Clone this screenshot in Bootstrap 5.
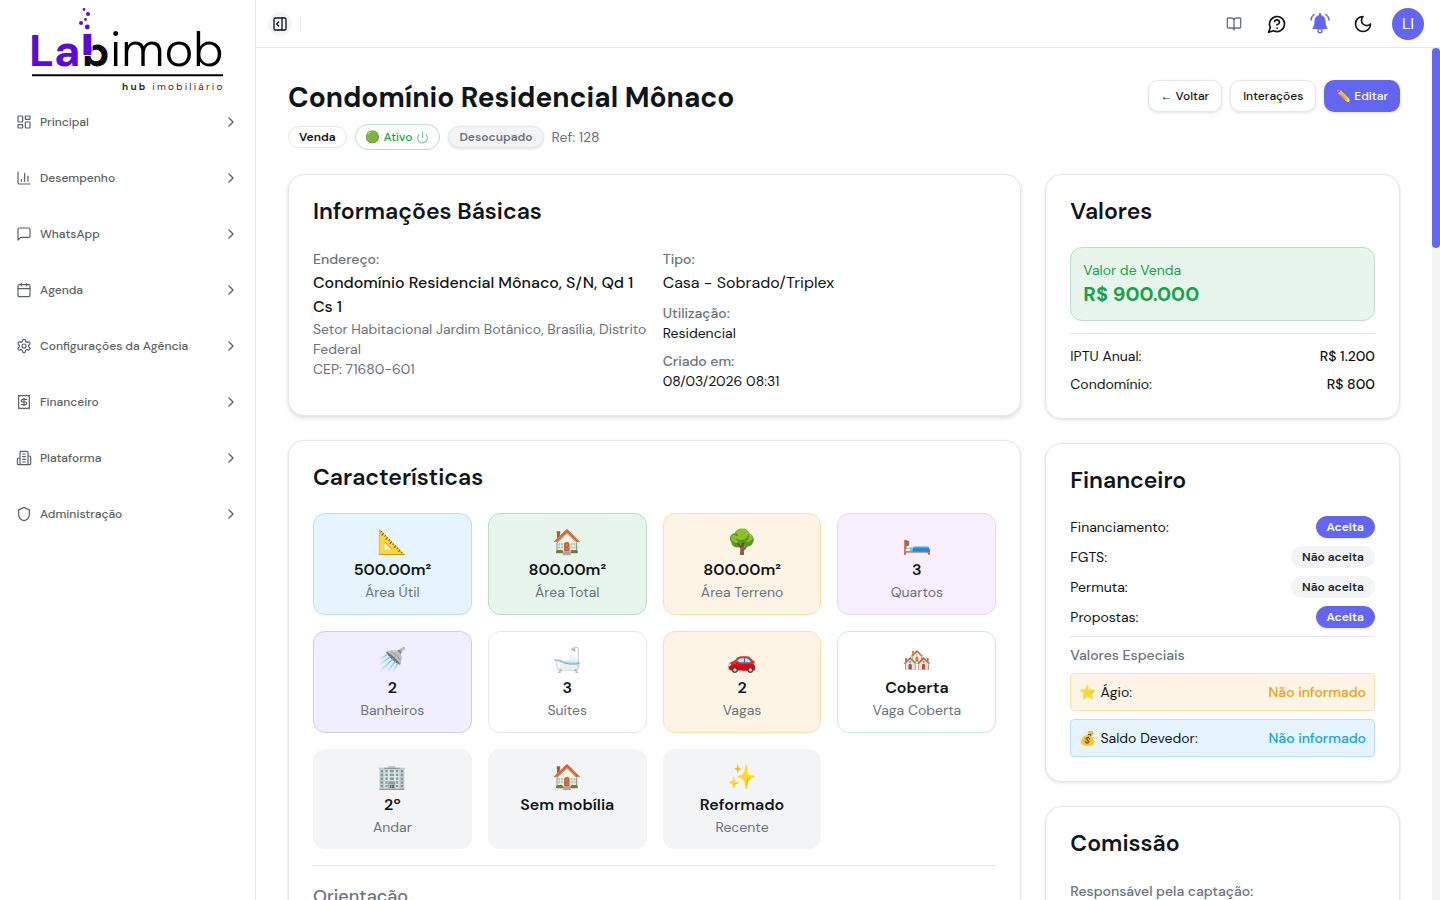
<!DOCTYPE html>
<html lang="pt-BR">
<head>
<meta charset="utf-8">
<meta name="viewport" content="width=device-width, initial-scale=1">
<title>Condomínio Residencial Mônaco - Labimob</title>
<link href="https://cdn.jsdelivr.net/npm/bootstrap@5.3.0/dist/css/bootstrap.min.css" rel="stylesheet">
<style>
  :root { --ink: #111418; --soft: #6b7280; --brand: #6366f1; --line: #e5e7eb; --ok: #16a34a; --warn: #f59e0b; --sky: #0ea5e9; }
  body { font-family: "DM Sans", Inter, "Liberation Sans", "Noto Color Emoji", sans-serif; font-size: 14px; line-height: 20px; color: var(--ink); background: #fff; }
  svg.ico { width: 16px; height: 16px; fill: none; stroke: currentColor; stroke-width: 2; stroke-linecap: round; stroke-linejoin: round; flex: none; }
  svg.ico-lg { width: 20px; height: 20px; }
  .sidebar { width: 256px; border-right: 1px solid var(--line); }
  .brand { height: 94px; padding-left: 28px; }
  .side-link { height: 56px; padding: 0 16px; font-size: 12px; font-weight: 500; color: #5b5f66; text-decoration: none; }
  .side-link .ico { stroke-width: 1.8; }
  .side-link .chev { stroke-width: 2; }
  .topbar { height: 48px; border-bottom: 1px solid var(--line); padding: 0 16px 0 12px; }
  .tool { width: 35px; height: 35px; color: var(--ink); }
  .toggle-side { width: 24px; height: 24px; background: #f3f4f6; color: var(--ink); }
  .avatar { width: 32px; height: 32px; background: var(--brand); color: #fff; font-size: 16px; }
  .rule-v { width: 1px; height: 16px; background: var(--line); }
  .track { width: 8px; background: #f3f4f6; }
  .thumb { height: 200px; background: var(--brand); border-radius: 4px; }
  .page-title { font-size: 28px; line-height: 36px; font-weight: 700; }
  .btn-act { height: 32px; font-size: 12px; font-weight: 500; line-height: 16px; padding: 0 12px; border-radius: 10px; border: 1px solid var(--line); background: #fff; color: var(--ink); box-shadow: 0 1px 3px rgba(0,0,0,.12); }
  .btn-act.primary { background: var(--brand); border: 0; color: #fff; }
  .arrow { font-family: "Liberation Sans", sans-serif; }
  .pill { font-size: 12px; line-height: 16px; font-weight: 600; padding: 2px 10px; border-radius: 11px; border: 1px solid var(--line); background: #fff; color: var(--ink); }
  .pill-on { background: var(--brand); border-color: var(--brand); color: #fff; box-shadow: 0 1px 2px rgba(0,0,0,.1); }
  .pill-off { background: #f3f4f6; border-color: #f3f4f6; color: #1f2430; }
  .pill-state { background: #f3f4f6; color: var(--soft); box-shadow: 0 1px 3px rgba(0,0,0,.12); }
  .pill-live { font-size: 12px; line-height: 16px; font-weight: 500; padding: 4px 10px; border-radius: 13px; border: 1px solid #b9e0ca; background: #fff; color: var(--ok); }
  .pill-live .ico { width: 13px; height: 13px; opacity: .6; }
  .panel { border: 1px solid var(--line); border-radius: 16px; padding: 24px; background: #fff; box-shadow: 0 1px 3px rgba(0,0,0,.12); }
  .panel-lift { box-shadow: 0 2px 4px rgba(0,0,0,.14); }
  .panel h2 { font-size: 23px; line-height: 24px; font-weight: 600; margin: 0 0 24px; }
  .lbl { font-weight: 500; color: var(--soft); }
  .lbl-tall { line-height: 24px; }
  .soft { color: var(--soft); }
  .body-lg { font-size: 16px; line-height: 24px; }
  .tile { padding: 12px; border-radius: 12px; text-align: center; height: 100%; }
  .tile .pic { font-size: 24px; line-height: 32px; }
  .t-sky { background: #e6f5fd; border: 1px solid #b5e1f6; }
  .t-ok { background: #e8f5ec; border: 1px solid #b9dfca; }
  .t-warn { background: #fef4e6; border: 1px solid #fbe0ae; }
  .t-plum { background: #f7effe; border: 1px solid #ead6fa; }
  .t-indigo { background: #efeffd; border: 1px solid #cccdf8; }
  .t-plain { border: 1px solid #efe2fb; }
  .t-teal { border: 1px solid #c5ecec; }
  .t-gray { background: #f3f4f6; }
  .price { font-size: 20px; line-height: 28px; font-weight: 700; }
  .sale { padding: 12px; border-radius: 12px; margin-bottom: 12px; color: var(--ok); }
  .split { border-top: 1px solid var(--line); }
  .fees { padding-top: 12px; }
  .strip { padding: 8px; border-radius: 4px; }
  .c-warn { color: var(--warn); }
  .c-sky { color: var(--sky); }
  .sub { font-size: 18px; line-height: 28px; font-weight: 500; color: var(--soft); margin: 0; }
</style>
</head>
<body>
<div class="d-flex vh-100 overflow-hidden">
  <aside class="sidebar d-flex flex-column flex-shrink-0">
    <a class="brand d-block flex-shrink-0" href="#" aria-label="Labimob">
      <svg width="200" height="94" viewBox="28 0 200 94">
        <g fill="#5b0bd5">
          <circle cx="84" cy="9.500" r="1.400"/><circle cx="88" cy="14" r="2"/><circle cx="85.500" cy="19.500" r="1.400"/><circle cx="81" cy="23" r="2"/><circle cx="87.300" cy="27" r="2.400"/>
        </g>
        <text x="29" y="66" font-family="DM Sans, sans-serif" font-weight="700" font-size="45" fill="#5b0bd5">La</text>
        <text x="82" y="66" font-family="DM Sans, sans-serif" font-weight="800" font-size="42" fill="#0c0c10">b</text>
        <path d="M83.500 34h8v21.500h-8z" fill="#5b0bd5"/>
        <path d="M83 55.500h9V34" fill="none" stroke="#fff"/>
        <text x="110" y="66" font-family="DM Sans, sans-serif" font-weight="300" font-size="49" fill="#000">imob</text>
        <path d="M32 75.200h191" stroke="#000" stroke-width="2"/>
        <text x="122" y="90" font-family="DM Sans, sans-serif" font-size="10" letter-spacing="2.200" fill="#33301c"><tspan font-weight="700">hub</tspan> imobiliário</text>
      </svg>
    </a>
    <nav class="d-flex flex-column" id="menu" aria-label="Menu principal"></nav>
  </aside>

  <div class="d-flex flex-column flex-grow-1 overflow-hidden">
    <header class="topbar d-flex align-items-center flex-shrink-0">
      <button class="btn toggle-side rounded-circle p-0 d-flex align-items-center justify-content-center" type="button" aria-label="Recolher menu">
        <svg class="ico" viewBox="0 0 24 24"><rect x="3" y="3" width="18" height="18" rx="2"/><path d="M15 3v18M10 15l-3-3 3-3"/></svg>
      </button>
      <span class="rule-v ms-2"></span>
      <div class="d-flex align-items-center gap-2 ms-auto">
        <button class="btn tool p-0 d-flex align-items-center justify-content-center soft" type="button" aria-label="Documentação"><svg class="ico" viewBox="0 0 24 24"><path d="M12 7v14M3 18a1 1 0 0 1-1-1V4a1 1 0 0 1 1-1h5a4 4 0 0 1 4 4 4 4 0 0 1 4-4h5a1 1 0 0 1 1 1v13a1 1 0 0 1-1 1h-6a3 3 0 0 0-3 3 3 3 0 0 0-3-3z"/></svg></button>
        <button class="btn tool p-0 d-flex align-items-center justify-content-center" type="button" aria-label="Ajuda"><svg class="ico ico-lg" viewBox="0 0 24 24"><path d="M7.900 20A9 9 0 1 0 4 16.100L2 22ZM9.090 9a3 3 0 0 1 5.830 1c0 2-3 3-3 3M12 17h.01"/></svg></button>
        <button class="btn tool p-0 d-flex align-items-center justify-content-center" type="button" aria-label="Notificações"><svg width="20" height="22" viewBox="0 0 20 22" fill="#6366f1" stroke="#6366f1" stroke-linecap="round" stroke-linejoin="round"><path d="M10 2.500c-3.300 0-5 2.300-5 5.200 0 4.200-1 6.300-2.300 7.800h14.600C16 14 15 11.900 15 7.700c0-2.900-1.700-5.200-5-5.200z"/><path d="M10 1v2" stroke-width="2"/><circle cx="10" cy="17.800" r="2" fill="#fff" stroke-width="1.400"/><path d="M4 1.500C2.200 2.800 1.200 4.500 1 7M16 1.500c1.800 1.300 2.800 3 3 5.500" fill="none" stroke-width="1.500"/></svg></button>
        <button class="btn tool p-0 d-flex align-items-center justify-content-center" type="button" aria-label="Modo escuro"><svg class="ico ico-lg" viewBox="0 0 24 24"><path d="M12 3a6 6 0 0 0 9 9 9 9 0 1 1-9-9Z"/></svg></button>
        <button class="btn avatar rounded-circle p-0 ms-1" type="button">LI</button>
      </div>
    </header>

    <div class="d-flex flex-grow-1 overflow-hidden">
      <main class="flex-grow-1 overflow-hidden px-4 py-4">
        <div class="px-2 pt-2">
          <div class="d-flex justify-content-between align-items-start mb-4">
            <div>
              <h1 class="page-title mb-2">Condomínio Residencial Mônaco</h1>
              <div class="d-flex align-items-center gap-2">
                <span class="pill">Venda</span>
                <button class="pill-live d-flex align-items-center gap-1" type="button"><span>🟢 Ativo</span><svg class="ico" viewBox="0 0 24 24"><path d="M12 2v10M18.400 6.600a9 9 0 1 1-12.770.04"/></svg></button>
                <span class="pill pill-state">Desocupado</span>
                <span class="soft">Ref: 128</span>
              </div>
            </div>
            <div class="d-flex gap-2">
              <button class="btn btn-act" type="button"><span class="arrow">←</span> Voltar</button>
              <button class="btn btn-act" type="button">Interações</button>
              <button class="btn btn-act primary" type="button">✏️ Editar</button>
            </div>
          </div>

          <div class="row g-4">
            <div class="col-8 d-flex flex-column gap-4">
              <section class="panel panel-lift">
                <h2>Informações Básicas</h2>
                <div class="row gx-3">
                  <div class="col-6">
                    <div class="lbl lbl-tall">Endereço:</div>
                    <div class="body-lg fw-medium">Condomínio Residencial Mônaco, S/N, Qd 1 Cs 1</div>
                    <div class="soft">Setor Habitacional Jardim Botânico, Brasília, Distrito Federal</div>
                    <div class="soft">CEP: 71680-601</div>
                  </div>
                  <div class="col-6">
                    <div class="lbl lbl-tall">Tipo:</div>
                    <div class="body-lg mb-2">Casa - Sobrado/Triplex</div>
                    <div class="lbl">Utilização:</div>
                    <div class="mb-2">Residencial</div>
                    <div class="lbl">Criado em:</div>
                    <div>08/03/2026 08:31</div>
                  </div>
                </div>
              </section>

              <section class="panel">
                <h2>Características</h2>
                <div class="row row-cols-4 g-3 mb-3" id="tiles"></div>
                <div class="split pt-3"><h3 class="sub">Orientação</h3></div>
              </section>
            </div>

            <div class="col-4 d-flex flex-column gap-4">
              <section class="panel">
                <h2>Valores</h2>
                <div class="sale t-ok">
                  <div>Valor de Venda</div>
                  <div class="price">R$ 900.000</div>
                </div>
                <div class="split fees d-flex flex-column gap-2">
                  <div class="d-flex justify-content-between"><span>IPTU Anual:</span><span class="fw-medium">R$ 1.200</span></div>
                  <div class="d-flex justify-content-between"><span>Condomínio:</span><span class="fw-medium">R$ 800</span></div>
                </div>
              </section>

              <section class="panel">
                <h2>Financeiro</h2>
                <div class="d-flex flex-column gap-2">
                  <div class="d-flex justify-content-between align-items-center"><span>Financiamento:</span><span class="pill pill-on">Aceita</span></div>
                  <div class="d-flex justify-content-between align-items-center"><span>FGTS:</span><span class="pill pill-off">Não aceita</span></div>
                  <div class="d-flex justify-content-between align-items-center"><span>Permuta:</span><span class="pill pill-off">Não aceita</span></div>
                  <div class="d-flex justify-content-between align-items-center"><span>Propostas:</span><span class="pill pill-on">Aceita</span></div>
                  <div class="split pt-2 d-flex flex-column gap-2">
                    <div class="lbl">Valores Especiais</div>
                    <div class="strip t-warn d-flex justify-content-between"><span>⭐ Ágio:</span><span class="c-warn fw-medium">Não informado</span></div>
                    <div class="strip t-sky d-flex justify-content-between"><span>💰 Saldo Devedor:</span><span class="c-sky fw-medium">Não informado</span></div>
                  </div>
                </div>
              </section>

              <section class="panel">
                <h2>Comissão</h2>
                <div class="lbl lbl-tall">Responsável pela captação:</div>
              </section>
            </div>
          </div>
        </div>
      </main>
      <div class="track flex-shrink-0" aria-hidden="true"><div class="thumb"></div></div>
    </div>
  </div>
</div>

<script src="https://cdn.jsdelivr.net/npm/bootstrap@5.3.0/dist/js/bootstrap.bundle.min.js"></script>
<script>
  const menu = [
    ['Principal', '<rect x="3" y="3" width="7" height="9" rx="1"/><rect x="14" y="3" width="7" height="5" rx="1"/><rect x="14" y="12" width="7" height="9" rx="1"/><rect x="3" y="16" width="7" height="5" rx="1"/>'],
    ['Desempenho', '<path d="M3 3v16a2 2 0 0 0 2 2h16M18 17V9M13 17V5M8 17v-3"/>'],
    ['WhatsApp', '<path d="M21 15a2 2 0 0 1-2 2H7l-4 4V5a2 2 0 0 1 2-2h14a2 2 0 0 1 2 2z"/>'],
    ['Agenda', '<path d="M8 2v4M16 2v4M3 10h18"/><rect x="3" y="4" width="18" height="18" rx="2"/>'],
    ['Configurações da Agência', '<path d="M12.220 2h-.44a2 2 0 0 0-2 2v.18a2 2 0 0 1-1 1.730l-.43.25a2 2 0 0 1-2 0l-.15-.08a2 2 0 0 0-2.730.73l-.22.38a2 2 0 0 0 .73 2.730l.15.1a2 2 0 0 1 1 1.720v.51a2 2 0 0 1-1 1.740l-.15.09a2 2 0 0 0-.73 2.730l.22.38a2 2 0 0 0 2.730.73l.15-.08a2 2 0 0 1 2 0l.43.25a2 2 0 0 1 1 1.730V20a2 2 0 0 0 2 2h.44a2 2 0 0 0 2-2v-.18a2 2 0 0 1 1-1.730l.43-.25a2 2 0 0 1 2 0l.15.08a2 2 0 0 0 2.730-.73l.22-.39a2 2 0 0 0-.73-2.730l-.15-.08a2 2 0 0 1-1-1.740v-.5a2 2 0 0 1 1-1.740l.15-.09a2 2 0 0 0 .73-2.730l-.22-.38a2 2 0 0 0-2.730-.73l-.15.08a2 2 0 0 1-2 0l-.43-.25a2 2 0 0 1-1-1.730V4a2 2 0 0 0-2-2z"/><circle cx="12" cy="12" r="3"/>'],
    ['Financeiro', '<path d="M4 2v20l2-1 2 1 2-1 2 1 2-1 2 1 2-1 2 1V2l-2 1-2-1-2 1-2-1-2 1-2-1-2 1ZM16 8h-6a2 2 0 1 0 0 4h4a2 2 0 1 1 0 4H8M12 17.500v-11"/>'],
    ['Plataforma', '<path d="M6 22V4a2 2 0 0 1 2-2h8a2 2 0 0 1 2 2v18ZM6 12H4a2 2 0 0 0-2 2v6a2 2 0 0 0 2 2h2M18 9h2a2 2 0 0 1 2 2v9a2 2 0 0 1-2 2h-2M10 6h4M10 10h4M10 14h4M10 18h4"/>'],
    ['Administração', '<path d="M20 13c0 5-3.500 7.500-7.660 8.950a1 1 0 0 1-.67-.01C7.500 20.500 4 18 4 13V6a1 1 0 0 1 1-1c2 0 4.500-1.200 6.240-2.720a1.170 1.170 0 0 1 1.520 0C14.510 3.810 17 5 19 5a1 1 0 0 1 1 1z"/>']
  ];
  document.getElementById('menu').innerHTML = menu.map(([name, icon]) =>
    `<a class="side-link d-flex align-items-center gap-2" href="#"><svg class="ico" viewBox="0 0 24 24">${icon}</svg><span class="flex-grow-1">${name}</span><svg class="ico chev" viewBox="0 0 24 24"><path d="m9 18 6-6-6-6"/></svg></a>`).join('');

  const tiles = [
    ['sky', '📐', '500.00m²', 'Área Útil'],
    ['ok', '🏠', '800.00m²', 'Área Total'],
    ['warn', '🌳', '800.00m²', 'Área Terreno'],
    ['plum', '🛏️', '3', 'Quartos'],
    ['indigo', '🚿', '2', 'Banheiros'],
    ['plain', '🛁', '3', 'Suítes'],
    ['warn', '🚗', '2', 'Vagas'],
    ['teal', '🏘️', 'Coberta', 'Vaga Coberta'],
    ['gray', '🏢', '2º', 'Andar'],
    ['gray', '🏠', 'Sem mobília', ''],
    ['gray', '✨', 'Reformado', 'Recente']
  ];
  document.getElementById('tiles').innerHTML = tiles.map(([tone, pic, val, label]) =>
    `<div class="col"><div class="tile t-${tone}"><div class="pic">${pic}</div><div class="body-lg fw-semibold">${val}</div><div class="soft">${label}</div></div></div>`).join('');
</script>
</body>
</html>
